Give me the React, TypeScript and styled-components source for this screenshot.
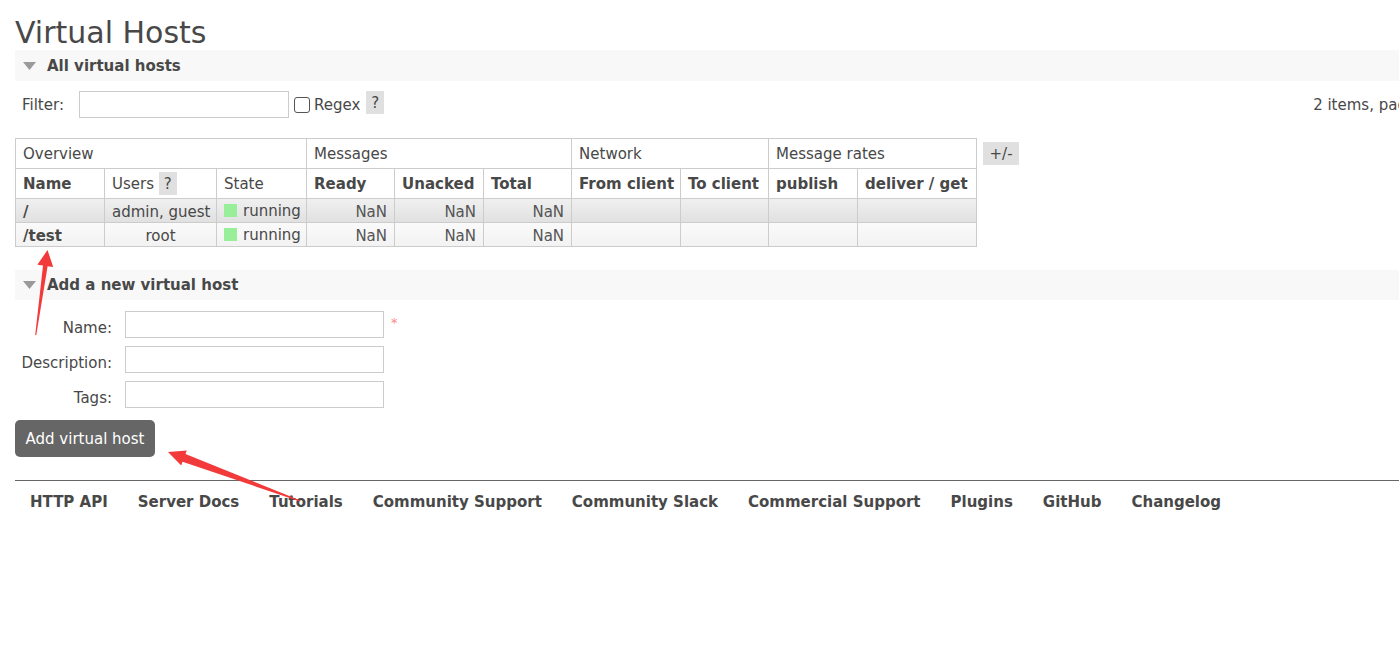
import React from "react";
import styled, { createGlobalStyle } from "styled-components";

const Global = createGlobalStyle`
  html, body { margin: 0; padding: 0; overflow: hidden; background: #fff; }
  body {
    font-family: "DejaVu Sans", Verdana, sans-serif;
    font-size: 15px;
    color: #484848;
  }
  * { box-sizing: border-box; }
`;

const Page = styled.div`
  position: relative;
  width: 1490px;
  padding: 15px 0 0 15px;
`;

const Title = styled.h1`
  margin: 0;
  font-size: 30px;
  line-height: 35px;
  font-weight: normal;
  color: #484848;
`;

const SectionBar = styled.h2`
  display: flex;
  align-items: center;
  height: 31px;
  margin: 0;
  padding-left: 8px;
  background: #f8f8f8;
  font-size: 15px;
  font-weight: bold;
  color: #484848;
  gap: 11px;
`;

const Triangle = styled.svg`
  width: 13px;
  height: 8px;
  flex: none;
`;

const FilterRow = styled.div`
  display: flex;
  align-items: center;
  height: 27px;
  margin-top: 10px;
  padding-left: 7px;
`;

const FilterLabel = styled.label`
  margin-right: 15px;
`;

const TextInput = styled.input<{ $w: number }>`
  width: ${(p) => p.$w}px;
  height: 27px;
  border: 1px solid #ccc;
  background: #fff;
  margin: 0;
  padding: 0 4px;
  font: inherit;
`;

const Check = styled.input`
  appearance: none;
  width: 16px;
  height: 16px;
  margin: 0 4px 0 5px;
  border: 1px solid #555;
  border-radius: 3px;
  background: #fff;
`;

const Help = styled.span`
  display: inline-flex;
  align-items: center;
  justify-content: center;
  width: 18px;
  height: 23px;
  background: #e0e0e0;
  color: #484848;
  font-size: 15px;
`;

const FilterHelp = styled(Help)`
  margin-left: 6px;
  align-self: flex-start;
`;

const Spacer = styled.div`
  flex: 1;
`;

const Paging = styled.span`
  margin-right: 26px;
`;

const TableWrap = styled.div`
  display: flex;
  align-items: flex-start;
  margin-top: 20px;
`;

const Table = styled.table`
  border-collapse: collapse;
  table-layout: fixed;
  width: 961px;
`;

const GroupTh = styled.th`
  height: 30px;
  padding: 0 7px;
  border: 1px solid #ccc;
  text-align: left;
  font-weight: normal;
  white-space: nowrap;
`;

const ColTh = styled.th<{ $bold?: boolean }>`
  height: 30px;
  padding: 0 7px;
  border: 1px solid #ccc;
  text-align: left;
  font-weight: ${(p) => (p.$bold ? "bold" : "normal")};
  white-space: nowrap;
`;

const Row = styled.tr<{ $alt: boolean }>`
  background: ${(p) =>
    p.$alt
      ? "linear-gradient(#f0f0f0, #e0e0e0)"
      : "linear-gradient(#fafafa, #f2f2f2)"};
`;

const Td = styled.td<{ $align?: string; $bold?: boolean }>`
  height: 24px;
  padding: 2px 7px 0;
  border: 1px solid #ccc;
  text-align: ${(p) => p.$align || "left"};
  font-weight: ${(p) => (p.$bold ? "bold" : "normal")};
  white-space: nowrap;
`;

const NaN_ = styled(Td)`
  color: #555;
`;

const StateCell = styled.span`
  display: inline-flex;
  align-items: center;
  gap: 6px;
`;

const StateDot = styled.span`
  width: 13px;
  height: 13px;
  background: #99ee99;
`;

const ToggleBtn = styled.span`
  display: inline-flex;
  align-items: center;
  justify-content: center;
  width: 36px;
  height: 23px;
  margin: 4px 0 0 6px;
  background: #e0e0e0;
`;

const SecondBar = styled(SectionBar)`
  margin-top: 23px;
  height: 30px;
`;

const Form = styled.div`
  display: grid;
  grid-template-columns: 97px 259px auto;
  column-gap: 13px;
  row-gap: 8px;
  margin-top: 11px;
  align-items: center;
`;

const FormLabel = styled.label`
  text-align: right;
  justify-self: end;
  white-space: nowrap;
  padding-top: 7px;
`;

const Required = styled.span`
  color: #f88;
  font-size: 13px;
  align-self: start;
  margin: 4px 0 0 -6px;
`;

const Blank = styled.span``;

const SubmitButton = styled.button`
  display: block;
  margin-top: 12px;
  width: 140px;
  height: 37px;
  border: none;
  border-radius: 5px;
  background: #666;
  color: #fff;
  font: inherit;
  font-size: 15px;
  padding: 1px 0 0;
`;

const Footer = styled.div`
  margin-top: 23px;
  border-top: 1px solid #666;
`;

const FooterList = styled.ul`
  display: flex;
  list-style: none;
  margin: 0;
  padding: 11px 0 0;
`;

const FooterLink = styled.li`
  padding: 0 15px;
  font-weight: bold;
  line-height: 21px;
  white-space: nowrap;
`;

const Arrows = styled.svg`
  position: absolute;
  left: 0;
  top: 0;
  width: 1399px;
  height: 668px;
  pointer-events: none;
`;

const cols = [
  { label: "Name", bold: true, w: 89 },
  { label: "Users", bold: false, w: 112, help: true },
  { label: "State", bold: false, w: 90 },
  { label: "Ready", bold: true, w: 88 },
  { label: "Unacked", bold: true, w: 89 },
  { label: "Total", bold: true, w: 88 },
  { label: "From client", bold: true, w: 109 },
  { label: "To client", bold: true, w: 88 },
  { label: "publish", bold: true, w: 89 },
  { label: "deliver / get", bold: true, w: 119 },
];

const rows = [
  { name: "/", users: "admin, guest" },
  { name: "/test", users: "root" },
];

const footerLinks = [
  "HTTP API",
  "Server Docs",
  "Tutorials",
  "Community Support",
  "Community Slack",
  "Commercial Support",
  "Plugins",
  "GitHub",
  "Changelog",
];

const Tri = () => (
  <Triangle viewBox="0 0 13 8">
    <polygon points="0,0 13,0 6.5,8" fill="#9a9a9a" />
  </Triangle>
);

export default function App() {
  return (
    <>
      <Global />
      <Page>
        <Title>Virtual Hosts</Title>
        <SectionBar>
          <Tri />
          All virtual hosts
        </SectionBar>
        <FilterRow>
          <FilterLabel>Filter:</FilterLabel>
          <TextInput $w={210} />
          <Check type="checkbox" />
          <span>Regex</span>
          <FilterHelp>?</FilterHelp>
          <Spacer />
          <Paging>2 items, page 1 of 1</Paging>
        </FilterRow>
        <TableWrap>
          <Table>
            <colgroup>
              {cols.map((c) => (
                <col key={c.label} style={{ width: c.w }} />
              ))}
            </colgroup>
            <thead>
              <tr>
                <GroupTh colSpan={3}>Overview</GroupTh>
                <GroupTh colSpan={3}>Messages</GroupTh>
                <GroupTh colSpan={2}>Network</GroupTh>
                <GroupTh colSpan={2}>Message rates</GroupTh>
              </tr>
              <tr>
                {cols.map((c) => (
                  <ColTh key={c.label} $bold={c.bold}>
                    {c.label}
                    {c.help && (
                      <>
                        {" "}
                        <Help>?</Help>
                      </>
                    )}
                  </ColTh>
                ))}
              </tr>
            </thead>
            <tbody>
              {rows.map((r, i) => (
                <Row key={r.name} $alt={i === 0}>
                  <Td $bold>{r.name}</Td>
                  <Td $align="center">{r.users}</Td>
                  <Td>
                    <StateCell>
                      <StateDot />
                      running
                    </StateCell>
                  </Td>
                  <NaN_ $align="right">NaN</NaN_>
                  <NaN_ $align="right">NaN</NaN_>
                  <NaN_ $align="right">NaN</NaN_>
                  <Td />
                  <Td />
                  <Td />
                  <Td />
                </Row>
              ))}
            </tbody>
          </Table>
          <ToggleBtn>+/-</ToggleBtn>
        </TableWrap>
        <SecondBar>
          <Tri />
          Add a new virtual host
        </SecondBar>
        <Form>
          <FormLabel>Name:</FormLabel>
          <TextInput $w={259} />
          <Required>*</Required>
          <FormLabel>Description:</FormLabel>
          <TextInput $w={259} />
          <Blank />
          <FormLabel>Tags:</FormLabel>
          <TextInput $w={259} />
          <Blank />
        </Form>
        <SubmitButton>Add virtual host</SubmitButton>
        <Footer>
          <FooterList>
            {footerLinks.map((l) => (
              <FooterLink key={l}>{l}</FooterLink>
            ))}
          </FooterList>
        </Footer>
        <Arrows viewBox="0 0 1399 668">
          <polygon
            points="47.5,250 53.2,266.9 47.6,266.2 36.3,335 35.2,335 43.0,265.4 37.4,264.7"
            fill="#f23a3a"
          />
          <polygon
            points="168,452 186.8,450.4 185.5,454.1 300.5,500.5 300,501.5 182.5,461.7 181.2,465.4"
            fill="#f23a3a"
          />
        </Arrows>
      </Page>
    </>
  );
}
